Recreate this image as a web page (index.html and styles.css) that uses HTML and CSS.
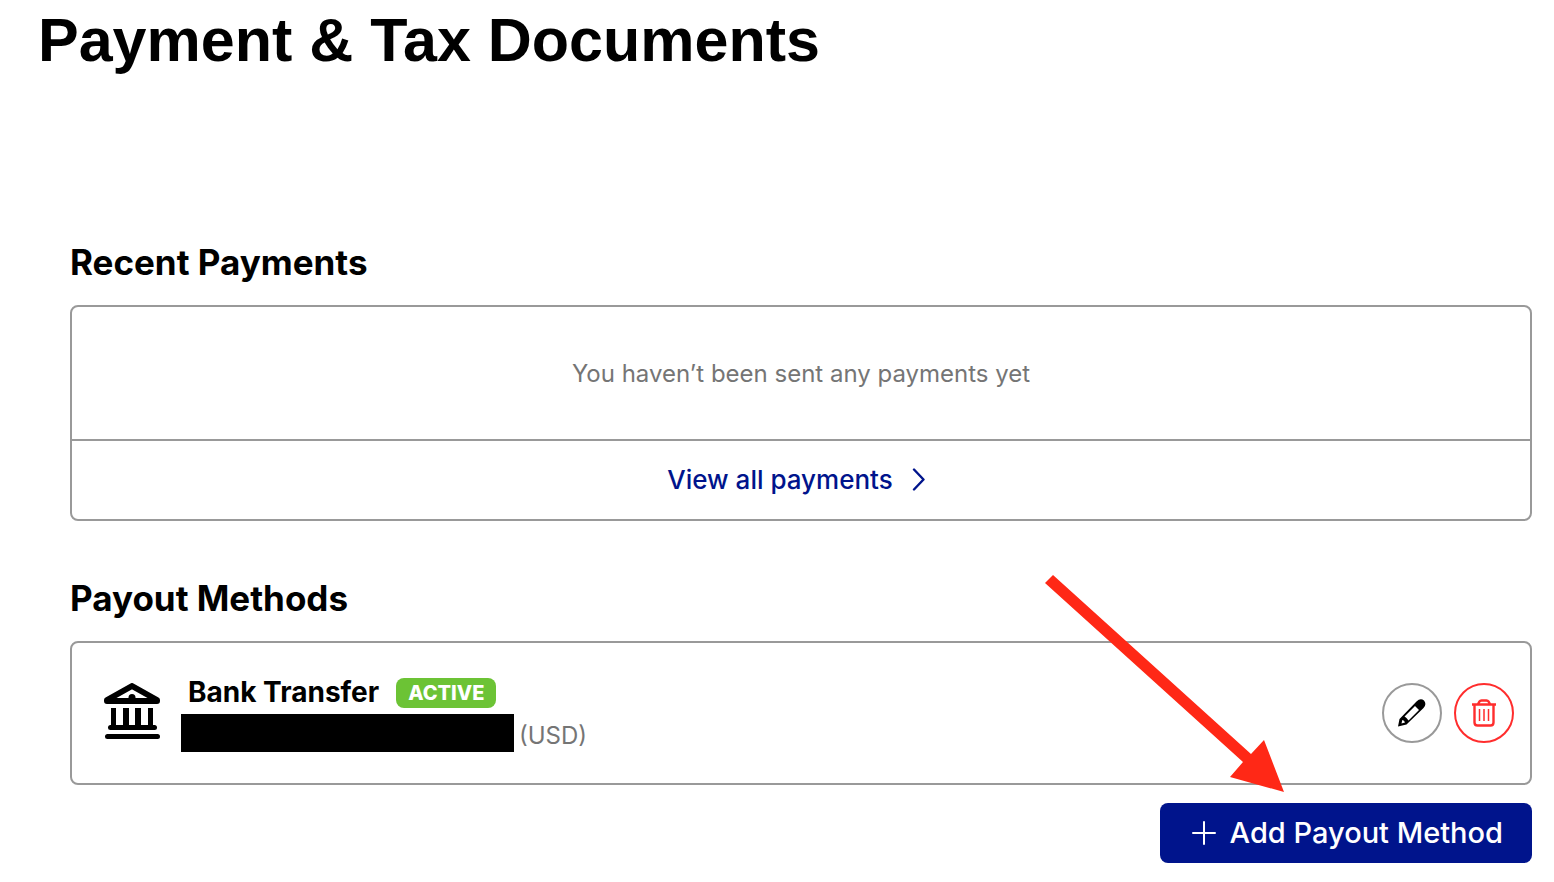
FILE: index.html
```html
<!DOCTYPE html>
<html lang="en">
<head>
<meta charset="utf-8">
<meta name="viewport" content="width=device-width, initial-scale=1">
<title>Payment &amp; Tax Documents</title>
<link rel="stylesheet" href="styles.css">
</head>
<body>
<main class="page">
  <h1 class="page-title">Payment &amp; Tax Documents</h1>

  <section class="section">
    <h2 class="section-title">Recent Payments</h2>
    <div class="card">
      <p class="empty">You haven’t been sent any payments yet</p>
      <a class="view-all" href="#payments">
        <span>View all payments</span>
        <svg class="chevron" viewBox="0 0 16 24" aria-hidden="true"><path d="M3 1.500 L12.500 11.500 L3 21.500"/></svg>
      </a>
    </div>
  </section>

  <section class="section">
    <h2 class="section-title">Payout Methods</h2>
    <div class="card method">
      <svg class="bank" viewBox="0 0 56 56" aria-hidden="true">
        <path class="bank-roof" d="M3 18 V17 L28 3 L53 17 V18 Z"/>
        <path d="M24.500 17 V14.500 A3.500 3.500 0 0 1 31.500 14.500 V17 Z"/>
        <path d="M7 25h5v18h-5zM19 25h6v18h-6zM31 25h6v18h-6zM44 25h5v18h-5z"/>
        <rect x="4" y="42" width="49" height="5" rx="2.5"/>
        <rect x="1" y="51" width="55" height="5" rx="2.5"/>
      </svg>
      <div class="details">
        <div class="name-row">
          <h3 class="name">Bank Transfer</h3>
          <span class="badge">ACTIVE</span>
        </div>
        <div class="account-row">
          <span class="redacted"></span>
          <span class="currency">(USD)</span>
        </div>
      </div>
      <button class="round" type="button" aria-label="Edit payout method">
        <svg class="pencil" viewBox="0 0 28 28" aria-hidden="true">
          <path fill-rule="evenodd" d="M0 27.500 L1.500 20 L18.500 2.500 Q22.500 -1.500 26 1.500 Q29 5.500 25.500 9 L8.500 25.500 Z M17 7 L6.500 17.500 L8.500 19 L10.500 21.500 L21 11 Z M4.300 21 L3.500 24.500 L7 23.500 L6 21.800 Z"/>
        </svg>
      </button>
      <button class="round round-danger" type="button" aria-label="Delete payout method">
        <svg class="trash" viewBox="0 0 24 28" aria-hidden="true">
          <path d="M0 5.500 H24 M6 5 L7.500 2.500 Q8.200 1.500 9.500 1.500 H14.500 Q15.800 1.500 16.500 2.500 L18 5 M2.500 5.500 V23.500 Q2.500 26.500 5.500 26.500 H18.500 Q21.500 26.500 21.500 23.500 V5.500"/>
          <path class="trash-lines" d="M7.500 10 V22 M12 10 V22 M16.500 10 V22"/>
        </svg>
      </button>
      <svg class="arrow" viewBox="0 0 240 218" aria-hidden="true"><path d="M8 0 L206 179 L219 165 L239 217 L185 202 L198 187 L0 8 Z"/></svg>
    </div>
    <div class="actions">
      <button class="add" type="button">
        <svg class="plus" viewBox="0 0 24 24" aria-hidden="true"><path d="M12 1 V23 M1 12 H23"/></svg>
        <span>Add Payout Method</span>
      </button>
    </div>
  </section>
</main>
</body>
</html>
```
FILE: styles.css
```css
* { box-sizing: border-box; }

body {
  margin: 0;
  background: #fff;
  color: #000;
  font-family: Inter, "Liberation Sans", sans-serif;
}

h1, h2, h3, p { margin: 0; }

button {
  font: inherit;
  cursor: pointer;
}

svg {
  display: block;
  flex: none;
}

.page { padding: 0 22px 19px 38px; }

.page-title {
  margin-bottom: 122px;
  font-family: "Liberation Sans", Arial, sans-serif;
  font-size: 61px;
  font-weight: 800;
  line-height: 80px;
}

.section { margin: 0 0 53px 32px; }
.section:last-child { margin-bottom: 0; }

.section-title {
  padding: 36px 0 19px;
  font-size: 35px;
  font-weight: 700;
  line-height: 48px;
}

.section + .section .section-title { padding-top: 0; }

.card {
  position: relative;
  border: 2px solid #999;
  border-radius: 8px;
}

.empty {
  padding: 49px 24px 47px;
  color: #757575;
  font-size: 24px;
  line-height: 36px;
  text-align: center;
}

.view-all {
  display: flex;
  align-items: center;
  justify-content: center;
  gap: 18px;
  padding: 20px 24px 20px 16px;
  border-top: 2px solid #999;
  color: #00148c;
  font-size: 26px;
  font-weight: 500;
  line-height: 38px;
  text-decoration: none;
}

.chevron {
  width: 16px;
  height: 24px;
  fill: none;
  stroke: currentColor;
  stroke-width: 2.4;
  stroke-linecap: round;
  stroke-linejoin: round;
}

.method {
  display: flex;
  align-items: center;
  gap: 12px;
  padding: 31px 16px;
}

.bank {
  width: 56px;
  height: 56px;
  margin: 0 0 4px 16px;
}

.bank-roof {
  fill: none;
  stroke: #000;
  stroke-width: 6;
  stroke-linejoin: round;
}

.details {
  flex: 1;
  margin-left: 9px;
}

.name-row {
  display: flex;
  align-items: center;
  gap: 17px;
  padding: 0 0 3px 7px;
}

.name {
  font-size: 28px;
  font-weight: 700;
  line-height: 37px;
}

.badge {
  padding: 0 12px;
  border-radius: 8px;
  background: #6cc335;
  color: #fff;
  font-size: 20px;
  font-weight: 800;
  line-height: 30px;
}

.account-row {
  display: flex;
  align-items: center;
  gap: 5px;
}

.redacted {
  width: 333px;
  height: 38px;
  background: #000;
}

.currency {
  padding-top: 6px;
  color: #757575;
  font-size: 24px;
  line-height: 32px;
}

.round {
  display: flex;
  flex: none;
  align-items: center;
  justify-content: center;
  width: 60px;
  height: 60px;
  padding: 0;
  border: 2px solid #999;
  border-radius: 50%;
  background: #fff;
  color: #000;
}

.round-danger {
  border-color: #ff2d2d;
  color: #ff2d2d;
}

.pencil {
  width: 28px;
  height: 28px;
}

.trash {
  width: 24px;
  height: 28px;
  fill: none;
  stroke: currentColor;
  stroke-width: 2.4;
}

.trash-lines { stroke-width: 1.5; }

.arrow {
  position: absolute;
  top: -68px;
  right: 245px;
  width: 240px;
  height: 218px;
  fill: #ff2816;
  pointer-events: none;
}

.actions {
  display: flex;
  justify-content: flex-end;
  margin-top: 18px;
}

.add {
  display: flex;
  align-items: center;
  gap: 14px;
  padding: 10px 29px 10px 32px;
  border: 0;
  border-radius: 8px;
  background: #00148c;
  color: #fff;
  font-size: 29px;
  font-weight: 500;
  line-height: 40px;
}

.plus {
  width: 24px;
  height: 24px;
  fill: none;
  stroke: currentColor;
  stroke-width: 2;
  stroke-linecap: round;
}
```
